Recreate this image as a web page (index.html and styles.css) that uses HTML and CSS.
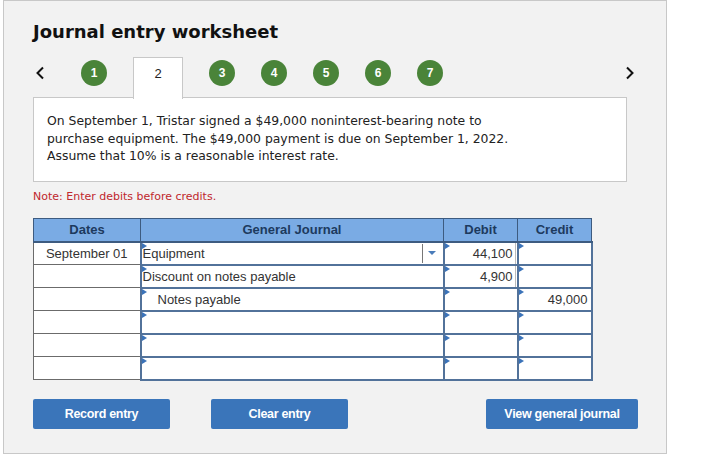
FILE: index.html
```html
<!DOCTYPE html>
<html lang="en">

<head>
    <meta charset="UTF-8">
    <meta name="viewport" content="width=device-width, initial-scale=1.0">
    <title>Journal entry worksheet</title>
    <link rel="stylesheet" href="styles.css">
</head>

<body>
    <div class="panel">
        <h1 class="title">Journal entry worksheet</h1>

        <div class="steps">
            <span class="arrow">
                <svg width="10" height="14" viewBox="0 0 10 14"><path d="M8 1.5 L2.5 7 L8 12.5" fill="none" stroke="#111" stroke-width="2"/></svg>
            </span>
            <span class="step">1</span>
            <span class="tab">2</span>
            <span class="step">3</span>
            <span class="step">4</span>
            <span class="step">5</span>
            <span class="step">6</span>
            <span class="step">7</span>
            <span class="arrow arrow-next">
                <svg width="10" height="14" viewBox="0 0 10 14"><path d="M2 1.5 L7.5 7 L2 12.5" fill="none" stroke="#111" stroke-width="2"/></svg>
            </span>
        </div>

        <div class="question">
            On September 1, Tristar signed a $49,000 noninterest-bearing note to<br>
            purchase equipment. The $49,000 payment is due on September 1, 2022.<br>
            Assume that 10% is a reasonable interest rate.
        </div>

        <p class="note">Note: Enter debits before credits.</p>

        <table class="journal">
            <colgroup>
                <col class="c-date">
                <col class="c-acct">
                <col class="c-num">
                <col class="c-num">
            </colgroup>
            <thead>
                <tr>
                    <th>Dates</th>
                    <th>General Journal</th>
                    <th>Debit</th>
                    <th>Credit</th>
                </tr>
            </thead>
            <tbody>
                <tr>
                    <td class="date">September 01</td>
                    <td class="inp acct">
                        <div class="select">
                            <span>Equipment</span>
                            <span class="caret"></span>
                        </div>
                    </td>
                    <td class="inp num"><div class="filled">44,100</div></td>
                    <td class="inp num"></td>
                </tr>
                <tr>
                    <td class="date"></td>
                    <td class="inp acct">Discount on notes payable</td>
                    <td class="inp num"><div class="filled">4,900</div></td>
                    <td class="inp num"></td>
                </tr>
                <tr>
                    <td class="date"></td>
                    <td class="inp acct credit">Notes payable</td>
                    <td class="inp num"></td>
                    <td class="inp num">49,000</td>
                </tr>
                <tr>
                    <td class="date"></td>
                    <td class="inp acct"></td>
                    <td class="inp num"></td>
                    <td class="inp num"></td>
                </tr>
                <tr>
                    <td class="date"></td>
                    <td class="inp acct"></td>
                    <td class="inp num"></td>
                    <td class="inp num"></td>
                </tr>
                <tr>
                    <td class="date"></td>
                    <td class="inp acct"></td>
                    <td class="inp num"></td>
                    <td class="inp num"></td>
                </tr>
            </tbody>
        </table>

        <div class="actions">
            <button class="btn">Record entry</button>
            <button class="btn">Clear entry</button>
            <button class="btn btn-wide">View general journal</button>
        </div>
    </div>
</body>

</html>
```

FILE: styles.css
```css
body {
    margin: 0;
    background: #fff;
    font-family: "DejaVu Sans", Verdana, sans-serif;
}

.panel {
    width: 605px;
    height: 432px;
    margin-left: 3px;
    padding: 20px 28px 0 29px;
    background: #f2f2f2;
    border: 1px solid #c8c8c8;
}

.title {
    margin: 0;
    font-size: 18px;
    line-height: 22px;
    font-weight: bold;
    color: #111;
}

.steps {
    display: flex;
    align-items: flex-start;
    gap: 26px;
    margin-top: 14px;
    height: 40px;
}

.arrow {
    width: 12px;
    height: 30px;
    display: flex;
    align-items: center;
    margin-top: 1px;
    margin-left: 2px;
    margin-right: 8px;
}

.arrow-next {
    margin-left: auto;
    margin-right: 1px;
}

.step {
    width: 26px;
    height: 26px;
    margin-top: 3px;
    border-radius: 50%;
    background: #4a8439;
    color: #fff;
    font-family: "Liberation Sans", Arial, sans-serif;
    font-weight: bold;
    font-size: 12px;
    line-height: 26px;
    text-align: center;
}

.tab {
    position: relative;
    z-index: 1;
    width: 48px;
    height: 41px;
    background: #fff;
    border: 1px solid #c8c8c8;
    border-bottom: none;
    font-family: "Liberation Sans", Arial, sans-serif;
    font-size: 13px;
    line-height: 32px;
    text-align: center;
    color: #222;
}

.question {
    width: 566px;
    padding: 14px 13px 16px 13px;
    background: #fff;
    border: 1px solid #c8c8c8;
    font-size: 12.4px;
    line-height: 17.5px;
    color: #222;
}

.note {
    margin: 8px 0 0 0;
    font-size: 11px;
    line-height: 14px;
    color: #c0272d;
}

.journal {
    margin-top: 14px;
    width: 559px;
    border-collapse: collapse;
    table-layout: fixed;
    font-family: "Liberation Sans", Arial, sans-serif;
    font-size: 13px;
    color: #333;
}

.c-date {
    width: 107px;
}

.c-acct {
    width: 303px;
}

.c-num {
    width: 74px;
}

.journal th {
    height: 22px;
    padding: 0;
    background: #7aabe4;
    border: 1px solid #3d5b80;
    border-bottom: 2px solid #3d5b80;
    color: #1d3a5e;
    font-weight: bold;
    text-align: center;
}

.journal td {
    height: 21px;
    padding: 0 3px;
    background: #fff;
}

.journal .date {
    border: 1px solid #6b6b6b;
    text-align: center;
}

.inp {
    position: relative;
    border: 2px solid #52729a;
}

.inp::before {
    content: "";
    position: absolute;
    top: 0;
    left: 0;
    border-top: 3px solid transparent;
    border-bottom: 3px solid transparent;
    border-left: 5px solid #3b73b9;
}

.journal .acct {
    padding-left: 1px;
}

.journal .credit {
    padding-left: 16px;
}

.select {
    display: flex;
    align-items: center;
    height: 21px;
}

.select span:first-child {
    flex: 1;
}

.caret {
    width: 17px;
    height: 19px;
    border-left: 1px solid #777;
    position: relative;
}

.caret::after {
    content: "";
    position: absolute;
    top: 7px;
    left: 5px;
    border-left: 4px solid transparent;
    border-right: 4px solid transparent;
    border-top: 4px solid #4a7cba;
}

.num {
    text-align: right;
}

.filled {
    margin-right: -2px;
    padding-right: 2px;
    border-right: 1px solid #bbb;
    line-height: 21px;
}

.actions {
    display: flex;
    gap: 41px;
    margin-top: 18px;
}

.btn {
    width: 137px;
    height: 30px;
    padding: 0;
    background: #3a75ba;
    border: none;
    border-radius: 2px;
    color: #fff;
    font-family: "Liberation Sans", Arial, sans-serif;
    font-weight: bold;
    font-size: 12.5px;
    letter-spacing: -0.3px;
}

.btn-wide {
    width: 152px;
    margin-left: auto;
}
```
